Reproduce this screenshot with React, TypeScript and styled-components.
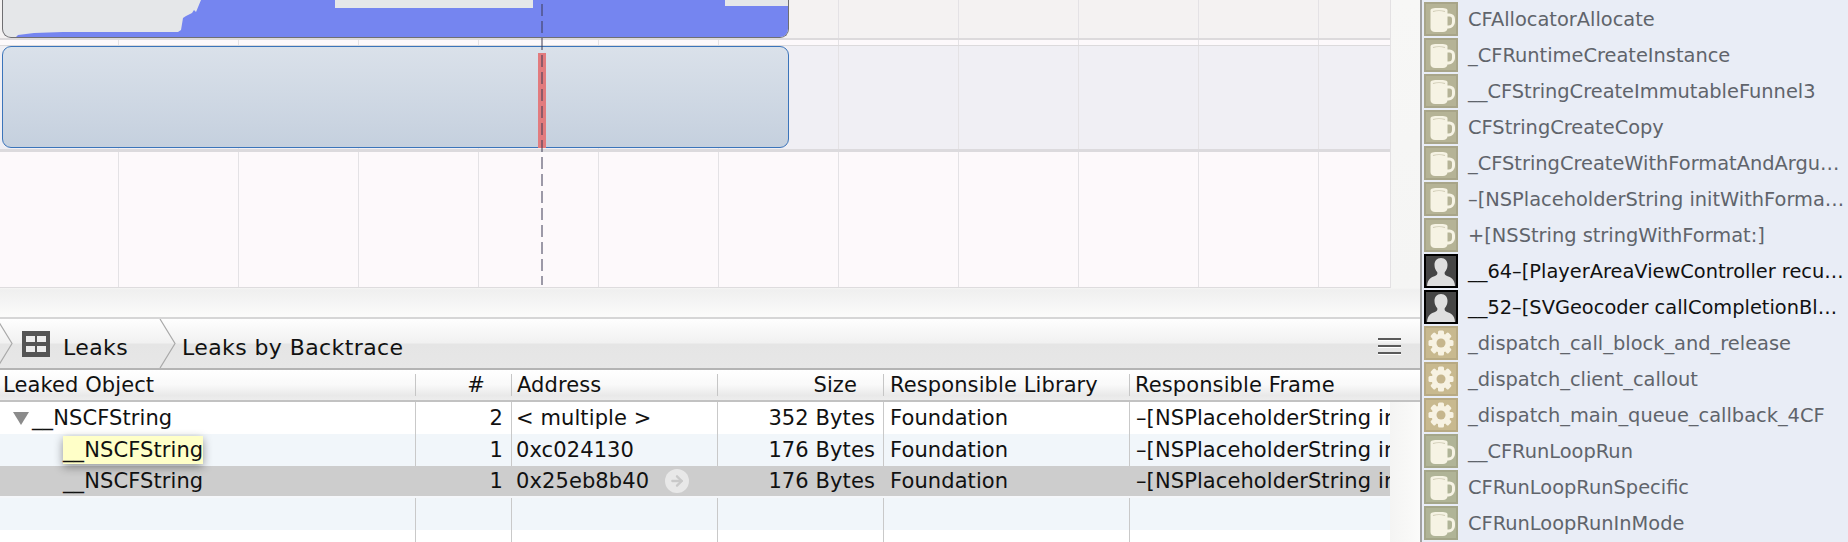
import React from 'react';
import styled, { createGlobalStyle } from 'styled-components';
import { ArrowRight } from 'lucide-react';

const GlobalStyle = createGlobalStyle`
  html, body {
    margin: 0;
    padding: 0;
    background: #fff;
  }
  * {
    box-sizing: border-box;
  }
`;

type FrameKind = 'mug' | 'loop' | 'user' | 'gear';

const frames: { kind: FrameKind; name: string }[] = [
  { kind: 'mug', name: 'CFAllocatorAllocate' },
  { kind: 'mug', name: '_CFRuntimeCreateInstance' },
  { kind: 'mug', name: '__CFStringCreateImmutableFunnel3' },
  { kind: 'mug', name: 'CFStringCreateCopy' },
  { kind: 'mug', name: '_CFStringCreateWithFormatAndArgu…' },
  { kind: 'mug', name: '–[NSPlaceholderString initWithForma…' },
  { kind: 'mug', name: '+[NSString stringWithFormat:]' },
  { kind: 'user', name: '__64–[PlayerAreaViewController recu…' },
  { kind: 'user', name: '__52–[SVGeocoder callCompletionBl…' },
  { kind: 'gear', name: '_dispatch_call_block_and_release' },
  { kind: 'gear', name: '_dispatch_client_callout' },
  { kind: 'gear', name: '_dispatch_main_queue_callback_4CF' },
  { kind: 'loop', name: '__CFRunLoopRun' },
  { kind: 'loop', name: 'CFRunLoopRunSpecific' },
  { kind: 'loop', name: 'CFRunLoopRunInMode' },
];

// the column cuts this one off in the reference
const FRAME_TEXT = '–[NSPlaceholderString in';

function MugGlyph() {
  return (
    <svg width="34" height="34" viewBox="0 0 34 34">
      <path d="M23 13h2.5a4 4 0 0 1 4 4v3a5 5 0 0 1-5 5H22" fill="none" stroke="#f6f3e4" strokeWidth="3" />
      <path d="M6.5 8.5C6.5 6.5 9 6 15 6s8.500.5 8.500 2.500V26c0 2.800-2 4-4.500 4h-8c-2.500 0-4.500-1.200-4.500-4z" fill="#f6f3e4" />
      <path d="M9 9.500c3-1 9-1 12 0" fill="none" stroke="#cfcbb4" strokeWidth="1.200" />
    </svg>
  );
}

function GearGlyph() {
  const teeth = [0, 45, 90, 135, 180, 225, 270, 315];
  return (
    <svg width="34" height="34" viewBox="0 0 34 34">
      {teeth.map((a) => (
        <rect key={a} x="14" y="4.500" width="6" height="6" rx="1.500" fill="#f7f2e2" transform={`rotate(${a} 17 17)`} />
      ))}
      <circle cx="17" cy="17" r="9.500" fill="#f7f2e2" />
      <circle cx="17" cy="17" r="4.500" fill="#c6b68d" />
    </svg>
  );
}

function UserGlyph() {
  return (
    <svg width="30" height="30" viewBox="0 0 30 30">
      <path
        d="M15 2c-4.200 0-6.500 3-6.500 7 0 3 1.200 5.500 2.800 7.200.4 1.800-.3 3-2.300 3.800C5.500 21.300 1.500 22.500 1 30h28c-.5-7.500-4.500-8.700-8-10-2-.8-2.700-2-2.300-3.800C20.300 14.500 21.500 12 21.500 9c0-4-2.300-7-6.500-7z"
        fill="#dedede"
      />
    </svg>
  );
}

function GridGlyph() {
  return (
    <svg width="28" height="26" viewBox="0 0 28 26">
      <rect width="28" height="26" fill="#555" />
      <rect x="4" y="5" width="9" height="6" fill="#eee" />
      <rect x="15" y="5" width="9" height="6" fill="#eee" />
      <rect x="4" y="15" width="9" height="6" fill="#eee" />
      <rect x="15" y="15" width="9" height="6" fill="#eee" />
    </svg>
  );
}

function CrumbChevron() {
  return (
    <ChevronSvg width="17" height="49" viewBox="0 0 17 49">
      <path d="M1 0l15 24.500L1 49" fill="none" stroke="#a9a9a9" strokeWidth="1.200" />
    </ChevronSvg>
  );
}

export default function App() {
  return (
    <>
      <GlobalStyle />
      <Page>
        <Main>
          <Timeline>
            <Tracks>
              <AllocTrack>
                <AllocGraph>
                  <svg width="786" height="37" viewBox="0 0 786 37" preserveAspectRatio="none">
                    <path
                      d="M13 37L15 35L31 33L60 32L175 32L178 30L180 18L183 16L189 13L191 10L193 12L198 0L332 0L332 8L530 8L530 0L722 0L722 6L786 6L786 37Z"
                      fill="#7585f0"
                    />
                  </svg>
                </AllocGraph>
              </AllocTrack>
              <Ruler />
              <LeakTrack>
                <LeakBar />
                <LeakMark />
              </LeakTrack>
              <EmptyTrack />
              <Playhead />
            </Tracks>
          </Timeline>

          <CrumbBar>
            <CrumbChevron />
            <CrumbIcon>
              <GridGlyph />
            </CrumbIcon>
            <CrumbText $width={100}>Leaks</CrumbText>
            <CrumbChevron />
            <CrumbText $width={240} $inset={6}>Leaks by Backtrace</CrumbText>
            <MenuLines>
              <span />
              <span />
              <span />
            </MenuLines>
          </CrumbBar>

          <HeaderRow>
            <HeaderCell $pad="3px">Leaked Object</HeaderCell>
            <HeaderCell $right $pad="26px">#</HeaderCell>
            <HeaderCell $pad="5px">Address</HeaderCell>
            <HeaderCell $right $pad="26px">Size</HeaderCell>
            <HeaderCell $pad="6px">Responsible Library</HeaderCell>
            <HeaderCell $pad="5px">Responsible Frame</HeaderCell>
          </HeaderRow>

          <TableBody>
            <Row>
              <TreeCell>
                <Disclosure />
                __NSCFString
              </TreeCell>
              <Cell $right>2</Cell>
              <AddressCell>&lt; multiple &gt;</AddressCell>
              <Cell $right>352 Bytes</Cell>
              <Cell $pad="6px">Foundation</Cell>
              <Cell $pad="6px">{FRAME_TEXT}</Cell>
            </Row>
            <Row $tint>
              <TreeCell $child>
                <Highlight>__NSCFString</Highlight>
              </TreeCell>
              <Cell $right>1</Cell>
              <AddressCell>0xc024130</AddressCell>
              <Cell $right>176 Bytes</Cell>
              <Cell $pad="6px">Foundation</Cell>
              <Cell $pad="6px">{FRAME_TEXT}</Cell>
            </Row>
            <Row $selected>
              <TreeCell $child>__NSCFString</TreeCell>
              <Cell $right>1</Cell>
              <AddressCell>
                0x25eb8b40
                <GoButton>
                  <ArrowRight size={16} strokeWidth={3.5} color="#c9c9c9" />
                </GoButton>
              </AddressCell>
              <Cell $right>176 Bytes</Cell>
              <Cell $pad="6px">Foundation</Cell>
              <Cell $pad="6px">{FRAME_TEXT}</Cell>
            </Row>
            <Row $tint>
              <Cell />
              <Cell />
              <Cell />
              <Cell />
              <Cell />
              <Cell />
            </Row>
            <Row>
              <Cell />
              <Cell />
              <Cell />
              <Cell />
              <Cell />
              <Cell />
            </Row>
          </TableBody>
        </Main>

        <Stack>
          {frames.map((f) => (
            <StackRow key={f.name}>
              <FrameIcon $kind={f.kind}>
                {f.kind === 'user' ? <UserGlyph /> : f.kind === 'gear' ? <GearGlyph /> : <MugGlyph />}
              </FrameIcon>
              <FrameName $own={f.kind === 'user'}>{f.name}</FrameName>
            </StackRow>
          ))}
        </Stack>
      </Page>
    </>
  );
}

const COLUMNS = '415px 96px 206px 166px 246px 261px';
const UI_FONT = `'DejaVu Sans', 'Noto Sans', sans-serif`;

const Page = styled.div`
  display: flex;
  width: 1848px;
  height: 542px;
  overflow: hidden;
  font-family: ${UI_FONT};
  color: #111;
`;

const Main = styled.div`
  display: flex;
  flex-direction: column;
  width: 1420px;
  flex: none;
`;

const Timeline = styled.div`
  height: 319px;
  flex: none;
  background: linear-gradient(to bottom, #f7f7f6 0, #f5f5f4 288px, #efefef 290px, #fbfbfa 316px);
  border-bottom: 2px solid #d6d6d6;
`;

const Tracks = styled.div`
  position: relative;
  width: 1391px;
  height: 288px;
  display: flex;
  flex-direction: column;
  border-right: 1px solid #e3e1e3;
  border-bottom: 1px solid #dedcde;
  --grid-line: linear-gradient(to right, #e4e2e5 1px, transparent 1px);
`;

const AllocTrack = styled.div`
  height: 40px;
  flex: none;
  padding-left: 2px;
  background-color: #f4f2f2;
  background-image: var(--grid-line);
  background-size: 120px 100%;
  background-position: -2px 0;
  border-bottom: 2px solid #dcdadc;
`;

const AllocGraph = styled.div`
  width: 787px;
  height: 38px;
  background: #e5e7e9;
  border: 1px solid #6f6f72;
  border-top: 0;
  border-radius: 0 0 9px 9px;
  overflow: hidden;
  line-height: 0;
`;

const Ruler = styled.div`
  height: 6px;
  flex: none;
  background-color: #fdf9fb;
  background-image: var(--grid-line);
  background-size: 120px 100%;
  background-position: -2px 0;
  border-bottom: 1px solid #dcdadc;
`;

const LeakTrack = styled.div`
  position: relative;
  height: 106px;
  flex: none;
  padding: 0 0 0 2px;
  background-color: #f0eff4;
  background-image: var(--grid-line);
  background-size: 120px 100%;
  background-position: -2px 0;
  border-bottom: 3px solid #dcdadd;
`;

const LeakBar = styled.div`
  width: 787px;
  height: 102px;
  border: 1px solid #3b74ba;
  border-radius: 9px;
  background: linear-gradient(to bottom, #dae1ea, #c5d0de);
`;

const LeakMark = styled.div`
  position: absolute;
  left: 538px;
  top: 7px;
  width: 8px;
  height: 95px;
  background: #e27b7e;
`;

const EmptyTrack = styled.div`
  flex: 1;
  background-color: #fdf9fb;
  background-image: var(--grid-line);
  background-size: 120px 100%;
  background-position: -2px 0;
`;

const Playhead = styled.div`
  position: absolute;
  left: 541px;
  top: 4px;
  bottom: 2px;
  width: 2px;
  background: repeating-linear-gradient(to bottom, rgba(60, 58, 84, 0.5) 0 12px, transparent 12px 17px);
`;

const CrumbBar = styled.div`
  display: flex;
  align-items: center;
  height: 51px;
  flex: none;
  background: linear-gradient(to bottom, #fefefe 0, #f1f1f1 48%, #e5e5e5 52%, #e7e7e7 100%);
  border-bottom: 2px solid #b4b4b4;
  position: relative;
`;

const ChevronSvg = styled.svg`
  flex: none;
  margin-left: -4px;
`;

const CrumbIcon = styled.div`
  display: flex;
  margin-left: 9px;
  margin-right: 13px;
`;

const CrumbText = styled.div<{ $width: number; $inset?: number }>`
  width: ${(p) => p.$width}px;
  padding-top: 8px;
  padding-left: ${(p) => p.$inset || 0}px;
  font-size: 22px;
  letter-spacing: 0.4px;
  white-space: nowrap;
`;

const MenuLines = styled.div`
  position: absolute;
  left: 1378px;
  top: 19px;
  display: flex;
  flex-direction: column;
  gap: 5px;

  span {
    display: block;
    width: 23px;
    height: 2px;
    background: #5a5a5a;
    box-shadow: 0 1px 0 #fff;
  }
`;

const HeaderRow = styled.div`
  display: grid;
  grid-template-columns: ${COLUMNS} 30px;
  align-items: center;
  height: 32px;
  flex: none;
  background: linear-gradient(to bottom, #fff 0, #f9f9f9 50%, #e9e9e9 85%, #ededed 100%);
  border-bottom: 2px solid #c2c2c2;
`;

const HeaderCell = styled.div<{ $right?: boolean; $pad: string }>`
  height: 22px;
  line-height: 22px;
  font-size: 21px;
  letter-spacing: 0.1px;
  white-space: nowrap;
  text-align: ${(p) => (p.$right ? 'right' : 'left')};
  ${(p) => (p.$right ? `padding-right: ${p.$pad};` : `padding-left: ${p.$pad};`)}

  & + & {
    border-left: 1px solid #c6c6c6;
  }
`;

const TableBody = styled.div`
  flex: 1;
  overflow: hidden;
  padding-right: 30px;
  background: linear-gradient(to right, #f4f4f3 1390px, #fbfbfa 1420px);
`;

const Row = styled.div<{ $tint?: boolean; $selected?: boolean }>`
  display: grid;
  grid-template-columns: ${COLUMNS};
  height: 32px;
  background: ${(p) => (p.$selected ? '#cdcdcd' : p.$tint ? '#f1f6fa' : '#fff')};
  border-bottom: ${(p) => (p.$selected ? '2px solid #f5f7fa' : '0')};

  & > * + * {
    border-left: 1px solid ${(p) => (p.$selected ? 'transparent' : '#c9c9c9')};
  }
`;

const Cell = styled.div<{ $right?: boolean; $pad?: string }>`
  display: flex;
  align-items: center;
  justify-content: ${(p) => (p.$right ? 'flex-end' : 'flex-start')};
  padding: 0 8px 0 ${(p) => p.$pad || '8px'};
  font-size: 21px;
  letter-spacing: 0.1px;
  white-space: nowrap;
  overflow: hidden;
`;

const TreeCell = styled(Cell)<{ $child?: boolean }>`
  padding-left: ${(p) => (p.$child ? '63px' : '13px')};
  overflow: visible;
`;

const AddressCell = styled(Cell)`
  padding-left: 4px;
  overflow: visible;
`;

const Disclosure = styled.span`
  width: 0;
  height: 0;
  margin-right: 3px;
  border-left: 8px solid transparent;
  border-right: 8px solid transparent;
  border-top: 13px solid #8b8b8b;
`;

const Highlight = styled.span`
  position: relative;
  z-index: 1;
  display: flex;
  align-items: center;
  height: 28px;
  background: #ffffc8;
  box-shadow: 0 3px 10px rgba(0, 0, 0, 0.4);
`;

const GoButton = styled.span`
  display: flex;
  align-items: center;
  justify-content: center;
  width: 24px;
  height: 24px;
  margin-left: 16px;
  border-radius: 50%;
  background: #e8e8e8;
`;

const Stack = styled.div`
  flex: 1;
  display: flex;
  flex-direction: column;
  gap: 2px;
  padding: 2px 0 0 2px;
  background: #e9edf6;
  border-left: 2px solid #a2a2a2;
  overflow: hidden;
`;

const StackRow = styled.div`
  display: flex;
  align-items: center;
  gap: 10px;
  height: 34px;
  flex: none;
`;

const iconColours: Record<FrameKind, string> = {
  mug: '#b5b396',
  loop: '#b0b497',
  gear: '#c8b98f',
  user: '#454545',
};

const FrameIcon = styled.div<{ $kind: FrameKind }>`
  display: flex;
  align-items: center;
  justify-content: center;
  width: 34px;
  height: 34px;
  flex: none;
  background: ${(p) => iconColours[p.$kind]};
  border: 2px solid ${(p) => (p.$kind === 'user' ? '#000' : 'rgba(110, 105, 80, 0.18)')};
  overflow: hidden;

  svg {
    flex: none;
  }
`;

const FrameName = styled.div<{ $own: boolean }>`
  font-size: 19.4px;
  white-space: nowrap;
  color: ${(p) => (p.$own ? '#111' : '#60646b')};
`;
